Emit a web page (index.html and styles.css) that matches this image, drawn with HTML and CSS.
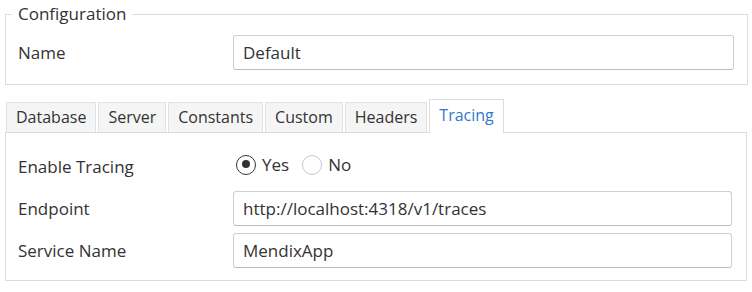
FILE: index.html
```html
<!DOCTYPE html>
<html>
<head>
<meta charset="utf-8">
<link rel="stylesheet" href="styles.css">
</head>
<body>
<fieldset class="config">
  <legend class="config-title">Configuration</legend>
  <div class="row row-name">
    <label class="label">Name</label>
    <div class="field"><div class="input">Default</div></div>
  </div>
</fieldset>
<div class="tabs">
  <div class="tab">Database</div>
  <div class="tab">Server</div>
  <div class="tab">Constants</div>
  <div class="tab">Custom</div>
  <div class="tab">Headers</div>
  <div class="tab tab-active">Tracing</div>
</div>
<div class="panel">
  <div class="row row-radio">
    <label class="label">Enable Tracing</label>
    <div class="field radios">
      <span class="radio radio-on"></span><span class="radio-text">Yes</span>
      <span class="radio"></span><span class="radio-text">No</span>
    </div>
  </div>
  <div class="row row-input">
    <label class="label">Endpoint</label>
    <div class="field"><div class="input">http://localhost:4318/v1/traces</div></div>
  </div>
  <div class="row row-input">
    <label class="label">Service Name</label>
    <div class="field"><div class="input">MendixApp</div></div>
  </div>
</div>
</body>
</html>
```
FILE: styles.css
```css
html, body {
  margin: 0;
  padding: 0;
  background: #ffffff;
}
body {
  font-family: "Open Sans", "Noto Sans", sans-serif;
  font-size: 17px;
  color: #333333;
  width: 752px;
  height: 292px;
  overflow: hidden;
}
.config {
  margin: 4px 4px 0 5px;
  padding: 0 13px 14px 6px;
  border: 1px solid #dcdcdc;
}
.config-title {
  padding: 0 6px;
  line-height: 20px;
  height: 20px;
}
.row {
  display: flex;
  align-items: center;
  padding-left: 6px;
}
.row-name {
  margin-top: 11px;
}
.label {
  width: 215px;
  flex: none;
}
.field {
  flex: 1;
}
.input {
  height: 33px;
  line-height: 33px;
  border: 1px solid #cfcfcf;
  border-bottom-color: #bcbcbc;
  border-radius: 3px;
  padding: 0 9px;
  box-sizing: content-box;
}
.tabs {
  display: flex;
  align-items: flex-end;
  gap: 2px;
  margin: 13px 0 0 6px;
  height: 34px;
  position: relative;
  z-index: 1;
}
.tab {
  height: 30px;
  line-height: 29px;
  padding: 0 9px;
  font-size: 16px;
  background: #f5f5f5;
  border: 1px solid #e2e2e2;
  border-bottom: none;
  box-sizing: border-box;
}
.tab-active {
  height: 34px;
  line-height: 31px;
  background: #ffffff;
  color: #2f78d0;
  border-color: #dcdcdc;
  margin-bottom: -1px;
}
.panel {
  margin: 0 5px 0 5px;
  border: 1px solid #dcdcdc;
  padding: 0 14px 12px 6px;
}
.row-radio {
  height: 36px;
  margin-top: 15px;
}
.row-input {
  margin-top: 7px;
}
.radios {
  display: flex;
  align-items: center;
  padding-left: 3px;
  margin-top: -3px;
}
.radio {
  width: 20px;
  height: 20px;
  border: 1px solid #c8c8c8;
  border-radius: 50%;
  box-sizing: border-box;
  margin-right: 6px;
  position: relative;
}
.radio-on {
  border: 1.5px solid #333333;
}
.radio-on::after {
  content: "";
  position: absolute;
  left: 4.5px;
  top: 4.5px;
  width: 8px;
  height: 8px;
  border-radius: 50%;
  background: #333333;
}
.radio-text {
  margin-right: 13px;
}
```
